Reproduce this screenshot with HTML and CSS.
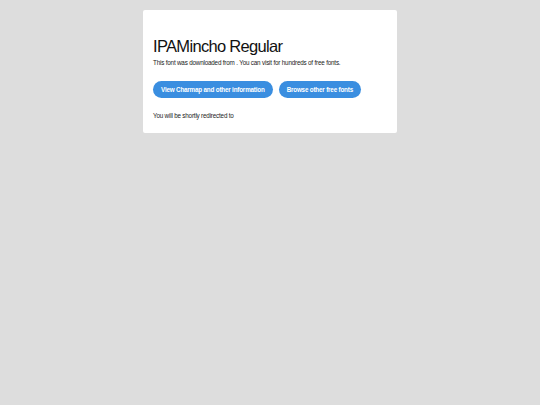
FILE: index.html
```html
<!DOCTYPE html>
<html>
<head>
<meta charset="utf-8">
<link rel="stylesheet" href="styles.css">
</head>
<body>
<div class="card">
  <h1 class="title">IPAMincho Regular</h1>
  <p class="text">This font was downloaded from . You can visit for hundreds of free fonts.</p>
  <div class="buttons">
    <a class="btn">View Charmap and other information</a>
    <a class="btn">Browse other free fonts</a>
  </div>
  <p class="text redirect">You will be shortly redirected to</p>
</div>
</body>
</html>
```
FILE: styles.css
```css
html, body {
  margin: 0;
  padding: 0;
  background: #dddddd;
  font-family: "Liberation Sans", Arial, sans-serif;
}
body {
  width: 540px;
  height: 405px;
}
.card {
  box-sizing: border-box;
  width: 254px;
  margin: 10px 0 0 143px;
  background: #ffffff;
  padding: 27px 10px 13.5px 10px;
  border-radius: 2px;
}
.title {
  margin: 0;
  font-size: 16.5px;
  letter-spacing: -0.68px;
  font-weight: normal;
  color: #111;
  line-height: 18px;
}
.text {
  margin: 3px 0 0 0;
  font-size: 6.3px;
  letter-spacing: -0.19px;
  line-height: 9px;
  color: #1a1a1a;
}
.buttons {
  display: flex;
  gap: 6px;
  margin-top: 13.5px;
}
.btn {
  display: block;
  background: #3a8ee0;
  color: #fff;
  font-weight: bold;
  font-size: 6.3px;
  letter-spacing: -0.19px;
  line-height: 17px;
  height: 17px;
  padding: 0 8px;
  border-radius: 9px;
}
.redirect {
  margin-top: 13px;
}
```
